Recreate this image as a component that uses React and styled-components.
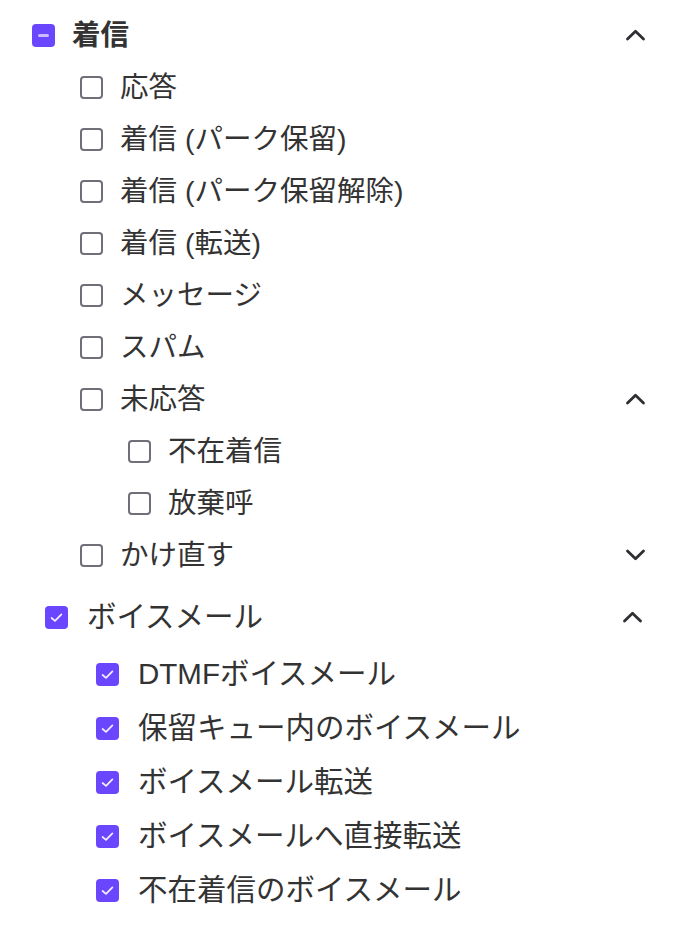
import { useState } from "react";
import styled, { createGlobalStyle } from "styled-components";

const GlobalStyle = createGlobalStyle`
  html, body {
    margin: 0;
    padding: 0;
    background: #ffffff;
  }
  body {
    font-family: "Liberation Sans", "Noto Sans CJK JP", sans-serif;
    color: #333333;
  }
`;

const sections = [
  {
    id: "incoming",
    label: "着信",
    bold: true,
    state: "mixed",
    open: true,
    children: [
      { id: "answer", label: "応答" },
      { id: "park", label: "着信 (パーク保留)" },
      { id: "unpark", label: "着信 (パーク保留解除)" },
      { id: "forward", label: "着信 (転送)" },
      { id: "message", label: "メッセージ" },
      { id: "spam", label: "スパム" },
      {
        id: "unanswered",
        label: "未応答",
        open: true,
        children: [
          { id: "missed", label: "不在着信" },
          { id: "abandoned", label: "放棄呼" },
        ],
      },
      { id: "callback", label: "かけ直す", open: false, children: [] },
    ],
  },
  {
    id: "voicemail",
    label: "ボイスメール",
    state: "checked",
    open: true,
    wide: true,
    children: [
      { id: "dtmf", label: "DTMFボイスメール", state: "checked" },
      { id: "queue", label: "保留キュー内のボイスメール", state: "checked" },
      { id: "vmforward", label: "ボイスメール転送", state: "checked" },
      { id: "direct", label: "ボイスメールへ直接転送", state: "checked" },
      { id: "vmmissed", label: "不在着信のボイスメール", state: "checked" },
    ],
  },
];

const Chevron = ({ up }) => (
  <ChevronSvg viewBox="0 0 21 12" $up={up}>
    <polyline
      points="2.5,10 10.5,2.3 18.5,10"
      fill="none"
      stroke="#2e2e33"
      strokeWidth="2.8"
      strokeLinecap="round"
      strokeLinejoin="round"
    />
  </ChevronSvg>
);

const Box = ({ state }) => {
  if (state === "checked") {
    return (
      <FilledBox>
        <svg width="17" height="17" viewBox="0 0 17 17">
          <polyline
            points="3.6,9 7,11.8 13.4,5.4"
            fill="none"
            stroke="#f4f1ff"
            strokeWidth="1.7"
            strokeLinecap="round"
            strokeLinejoin="round"
          />
        </svg>
      </FilledBox>
    );
  }
  if (state === "mixed") {
    return (
      <FilledBox>
        <Dash />
      </FilledBox>
    );
  }
  return <EmptyBox />;
};

const Node = ({ node, level, wide }) => {
  const [open, setOpen] = useState(node.open);
  const hasToggle = node.children !== undefined;

  return (
    <>
      <Row $level={level} $wide={wide}>
        <Box state={node.state} />
        <Label $bold={node.bold} $wide={wide}>
          {node.label}
        </Label>
        {hasToggle && (
          <Toggle onClick={() => setOpen(!open)}>
            <Chevron up={open} />
          </Toggle>
        )}
      </Row>
      {open &&
        node.children &&
        node.children.map((child) => (
          <Node key={child.id} node={child} level={level + 1} wide={wide} />
        ))}
    </>
  );
};

const Section = ({ section }) => {
  const [open, setOpen] = useState(section.open);

  return (
    <Group $wide={section.wide}>
      <Row $level={0}>
        <Box state={section.state} />
        <Label $bold={section.bold} $wide={section.wide}>
          {section.label}
        </Label>
        <Toggle onClick={() => setOpen(!open)}>
          <Chevron up={open} />
        </Toggle>
      </Row>
      {open && (
        <Children $wide={section.wide}>
          {section.children.map((child) => (
            <Node
              key={child.id}
              node={child}
              level={1}
              wide={section.wide}
            />
          ))}
        </Children>
      )}
    </Group>
  );
};

const App = () => {
  return (
    <>
      <GlobalStyle />
      <Panel>
        {sections.map((s) => (
          <Section key={s.id} section={s} />
        ))}
      </Panel>
    </>
  );
};

export default App;

const Panel = styled.div`
  display: flex;
  flex-direction: column;
  gap: 10px;
  padding: 9px 42px 0 32px;
`;

const Group = styled.div`
  display: flex;
  flex-direction: column;
  padding-left: ${(p) => (p.$wide ? "13px" : "0")};
  padding-right: ${(p) => (p.$wide ? "3px" : "0")};
`;

const Children = styled.div`
  display: flex;
  flex-direction: column;
  margin-top: ${(p) => (p.$wide ? "4px" : "0")};
`;

const Row = styled.div`
  display: flex;
  align-items: center;
  height: ${(p) => (p.$wide ? "54px" : "52px")};
  padding-left: ${(p) => p.$level * 48 + (p.$wide && p.$level ? 3 : 0)}px;
`;

const EmptyBox = styled.span`
  box-sizing: border-box;
  flex: none;
  width: 23px;
  height: 23px;
  border: 2px solid #6f6f79;
  border-radius: 4px;
  background: #ffffff;
`;

const FilledBox = styled.span`
  box-sizing: border-box;
  flex: none;
  display: flex;
  align-items: center;
  justify-content: center;
  width: 23px;
  height: 23px;
  border-radius: 4px;
  background: #6b46ff;
`;

const Dash = styled.span`
  width: 11px;
  height: 3px;
  border-radius: 2px;
  background: #c9bbff;
`;

const Label = styled.span`
  margin-left: ${(p) => (p.$wide ? "19px" : "17px")};
  font-size: ${(p) => (p.$wide ? "29.5px" : "28.5px")};
  line-height: 1;
  font-weight: ${(p) => (p.$bold ? 700 : 400)};
  color: #333333;
  white-space: nowrap;
`;

const Toggle = styled.button`
  margin-left: auto;
  display: flex;
  align-items: center;
  justify-content: center;
  width: 22px;
  height: 28px;
  padding: 0;
  border: none;
  background: transparent;
  cursor: pointer;
`;

const ChevronSvg = styled.svg`
  flex: none;
  width: 21px;
  height: 12px;
  transform: ${(p) => (p.$up ? "none" : "rotate(180deg)")};
`;
